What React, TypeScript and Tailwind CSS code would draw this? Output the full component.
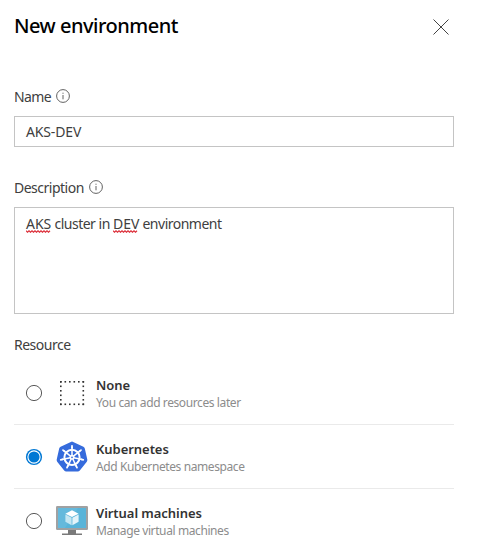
import React from "react";

function InfoIcon() {
  return (
    <svg width="14" height="14" viewBox="0 0 14 14" className="-mt-[2px] shrink-0" fill="none" stroke="#505050">
      <circle cx="7" cy="7" r="6.400" strokeWidth=".9" />
      <path d="M7 6v4.300" strokeWidth=".9" />
      <path d="M7 3.700v1.100" strokeWidth=".9" />
    </svg>
  );
}

function Misspelled({ children }: { children: React.ReactNode }) {
  return (
    <span className="relative inline-block tracking-normal">
      {children}
      <svg className="absolute left-0 top-[16px]" width="26" height="3" viewBox="0 0 26 3" fill="none">
        <path
          d="M0 .8l1.500 1.400l1.500-1.400l1.500 1.400l1.500-1.400l1.500 1.400l1.500-1.400l1.500 1.400l1.500-1.400l1.500 1.400l1.500-1.400l1.500 1.400l1.500-1.400l1.500 1.400l1.500-1.400l1.500 1.400l1.500-1.400"
          stroke="#dc2f3a"
          strokeWidth="1.200"
        />
      </svg>
    </span>
  );
}

function NoneIcon() {
  const steps = [0, 1, 2, 3, 4, 5];
  return (
    <svg width="32" height="32" viewBox="0 0 32 32" fill="#333">
      {steps.map((i) => (
        <g key={i}>
          <rect x={4 + i * 4.5} y="4" width="1.6" height="1.6" />
          <rect x={4 + i * 4.5} y="26.5" width="1.6" height="1.6" />
          <rect x="4" y={4 + i * 4.5} width="1.6" height="1.6" />
          <rect x="26.5" y={4 + i * 4.5} width="1.6" height="1.6" />
        </g>
      ))}
    </svg>
  );
}

function KubernetesIcon() {
  const spokes = [0, 1, 2, 3, 4, 5, 6];
  return (
    <svg width="32" height="32" viewBox="0 0 32 32">
      <path
        d="M14.8 .9a2.6 2.6 0 0 1 2.4 0l10.2 4.9a2.6 2.6 0 0 1 1.4 1.8l2.5 11a2.6 2.6 0 0 1-.5 2.1l-7 8.8a2.6 2.6 0 0 1-2 1H10.2a2.6 2.6 0 0 1-2-1l-7-8.8a2.6 2.6 0 0 1-.5-2.1l2.5-11a2.6 2.6 0 0 1 1.4-1.8z"
        fill="#356bdc"
      />
      <g stroke="#fff" fill="none">
        <circle cx="16" cy="16.3" r="7.600" strokeWidth="2" />
        {spokes.map((i) => (
          <g key={i} transform={`rotate(${(i * 360) / 7} 16 16.3)`}>
            <path d="M16 14.400V6" strokeWidth="1.500" />
            <path d="M16 6.700V4.800" strokeWidth="1.800" strokeLinecap="round" />
          </g>
        ))}
      </g>
      <circle cx="16" cy="16.3" r="2.500" fill="#fff" />
      <circle cx="16" cy="16.3" r=".9" fill="#356bdc" />
    </svg>
  );
}

function VirtualMachineIcon() {
  return (
    <svg width="32" height="32" viewBox="0 0 32 32">
      <path d="M12 24h8v4.500h6V30H6v-1.500h6z" fill="#7a7a7a" />
      <rect x="0" y="1" width="32" height="24" rx="1.200" fill="#a0a1a2" />
      <rect x="2" y="3" width="28" height="20" fill="#59b4d9" />
      <path d="M2 3h20L9 23H2z" fill="#65b9dc" />
      <path d="M16 5.300l6.600 3.400L16 12.100 9.400 8.700z" fill="#fff" />
      <path d="M9.400 9.500l6.200 3.200v7.500l-6.200-3.500z" fill="#c5e6f2" />
      <path d="M22.600 9.500l-6.200 3.200v7.500l6.200-3.500z" fill="#e3f3f9" />
    </svg>
  );
}

function Radio({ checked }: { checked?: boolean }) {
  return (
    <svg width="18" height="18" viewBox="0 0 18 18" className="shrink-0" fill="none">
      {checked ? (
        <>
          <circle cx="9" cy="9" r="8.100" fill="#0078d4" />
          <circle cx="9" cy="9" r="6.100" stroke="#fff" strokeWidth="1.100" />
        </>
      ) : (
        <circle cx="9" cy="9" r="7.600" stroke="#5a5a5a" strokeWidth="1" />
      )}
    </svg>
  );
}

type OptionProps = {
  icon: React.ReactNode;
  title: string;
  note: string;
  checked?: boolean;
};

function Option({ icon, title, note, checked }: OptionProps) {
  return (
    <div className="flex h-16 shrink-0 items-center border-b border-[#eaeaea] pl-[11px]">
      <Radio checked={checked} />
      <span className="ml-[13px] mr-2 shrink-0">{icon}</span>
      <div className="flex flex-col whitespace-nowrap pt-[2px]">
        <span className="text-[13px] font-semibold leading-[18px] tracking-[-0.05px] text-[#333]">{title}</span>
        <span className="text-[12px] leading-[17px] tracking-[-0.4px] text-[#8c8c8c]">{note}</span>
      </div>
    </div>
  );
}

export default function App() {
  return (
    <main className="flex h-[547px] w-[489px] flex-col overflow-hidden bg-white pl-[14px] pr-[35px] font-['Noto_Sans',sans-serif] text-[14px] text-[#404040]">
      <header className="flex h-[53px] shrink-0 items-center justify-between">
        <h1 className="-mt-[2px] whitespace-nowrap text-[20px] font-medium leading-7 tracking-[-0.5px] text-black">New environment</h1>
        <svg width="16" height="16" viewBox="0 0 16 16" className="mr-[5px]" stroke="#444" strokeWidth="1">
          <path d="M.5.5l15 15M15.500.5l-15 15" />
        </svg>
      </header>
      <div className="mt-[34px] flex h-5 shrink-0 items-center gap-[5px] leading-5">
        <span className="tracking-[-0.6px]">Name</span>
        <InfoIcon />
      </div>
      <div className="mt-[9px] flex h-[31px] shrink-0 items-center border border-[#c4c4c4] px-[11px]">
        <span className="tracking-[-0.15px]">AKS-DEV</span>
      </div>
      <div className="mt-[31px] flex h-5 shrink-0 items-center gap-[5px] leading-5">
        <span className="tracking-[-0.5px]">Description</span>
        <InfoIcon />
      </div>
      <div className="mt-[9px] h-[107px] shrink-0 whitespace-nowrap border border-[#c4c4c4] px-[11px] pt-[6px] leading-5 tracking-[-0.5px]">
        <Misspelled>AKS</Misspelled> cluster in <Misspelled>DEV</Misspelled> environment
      </div>
      <div className="mt-[21px] h-5 shrink-0 leading-5 tracking-[-0.5px]">Resource</div>
      <div className="mt-[6px] flex flex-col">
        <Option icon={<NoneIcon />} title="None" note="You can add resources later" />
        <Option icon={<KubernetesIcon />} title="Kubernetes" note="Add Kubernetes namespace" checked />
        <Option icon={<VirtualMachineIcon />} title="Virtual machines" note="Manage virtual machines" />
      </div>
    </main>
  );
}
